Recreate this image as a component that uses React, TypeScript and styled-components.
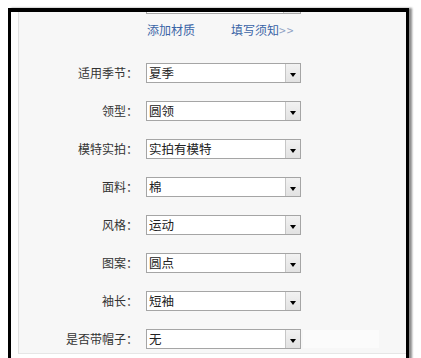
import React from "react";
import styled, { createGlobalStyle } from "styled-components";

const GlobalStyle = createGlobalStyle`
  html, body {
    margin: 0;
    padding: 0;
    background: #ffffff;
    overflow: hidden;
  }
  body {
    font-family: "Noto Sans CJK SC", "Liberation Sans", sans-serif;
    font-size: 12px;
  }
`;

const Frame = styled.div`
    margin: 8px 0 0 8px;
    width: 395px;
    height: 350px;
    border-top: 4px solid #000;
    border-left: 3px solid #000;
    border-right: 3px solid #000;
    background: #ffffff;
    box-shadow: 3px 0 2px rgba(0, 0, 0, 0.45);
    overflow: hidden;
  `,
  Panel = styled.div`
    margin-left: 7px;
    height: 341px;
    border-left: 1px solid #e2e2e2;
    border-bottom: 1px solid #e6e6e6;
    background: #f7f7f7;
    display: flex;
    flex-direction: column;
  `,
  Stub = styled.div`
    margin-left: 127px;
    width: 153px;
    height: 1px;
    border: 1px solid #a8a8a8;
    border-top: none;
    background: #fff;
    position: relative;
    &::after {
      content: "";
      position: absolute;
      right: 0;
      top: 0;
      bottom: 0;
      width: 16px;
      border-left: 1px solid #c4c4c4;
      background: #e9e9e9;
    }
  `,
  Links = styled.div`
    margin: 9px 0 0 128px;
    display: flex;
    gap: 36px;
    line-height: 14px;
    font-size: 12px;
  `,
  Link = styled.a`
    color: #3a64a6;
    text-decoration: none;
    cursor: pointer;
  `,
  More = styled.span`
    color: #8fa2c4;
    letter-spacing: 1px;
  `,
  Form = styled.div`
    margin-top: 26px;
    display: flex;
    flex-direction: column;
    gap: 18px;
  `,
  Row = styled.div`
    display: grid;
    grid-template-columns: 119px 155px auto;
    column-gap: 8px;
    align-items: center;
    height: 20px;
  `,
  Label = styled.label`
    text-align: right;
    color: #333333;
    font-size: 12px;
    line-height: 14px;
    white-space: nowrap;
  `,
  Select = styled.div`
    box-sizing: border-box;
    width: 155px;
    height: 20px;
    border: 1px solid #a5a5a5;
    background: #ffffff;
    display: flex;
    align-items: stretch;
  `,
  Value = styled.span`
    flex: 1;
    padding-left: 2px;
    font-size: 12.5px;
    line-height: 18px;
    color: #222222;
    white-space: nowrap;
  `,
  Arrow = styled.span`
    width: 15px;
    border-left: 1px solid #c6c6c6;
    background: linear-gradient(#f2f2f2, #e2e2e2);
    display: flex;
    justify-content: center;
    align-items: flex-end;
    padding-bottom: 5px;
    box-sizing: border-box;
    &::before {
      content: "";
      border-left: 3.5px solid transparent;
      border-right: 3.5px solid transparent;
      border-top: 4px solid #000;
    }
  `,
  Ghost = styled.div<{ show: boolean }>`
    margin-left: -6px;
    width: 76px;
    height: 18px;
    background: ${({ show }) => (show ? "#fbfbfb" : "transparent")};
  `;

const fields: { label: string; value: string }[] = [
  { label: "适用季节：", value: "夏季" },
  { label: "领型：", value: "圆领" },
  { label: "模特实拍：", value: "实拍有模特" },
  { label: "面料：", value: "棉" },
  { label: "风格：", value: "运动" },
  { label: "图案：", value: "圆点" },
  { label: "袖长：", value: "短袖" },
  { label: "是否带帽子：", value: "无" },
];

const App: React.FC = () => (
  <>
    <GlobalStyle />
    <Frame>
      <Panel>
        <Stub />
        <Links>
          <Link>添加材质</Link>
          <Link>
            填写须知<More>&gt;&gt;</More>
          </Link>
        </Links>
        <Form>
          {fields.map(({ label, value }, i) => (
            <Row key={label}>
              <Label>{label}</Label>
              <Select>
                <Value>{value}</Value>
                <Arrow />
              </Select>
              <Ghost show={i === fields.length - 1} />
            </Row>
          ))}
        </Form>
      </Panel>
    </Frame>
  </>
);

export default App;
